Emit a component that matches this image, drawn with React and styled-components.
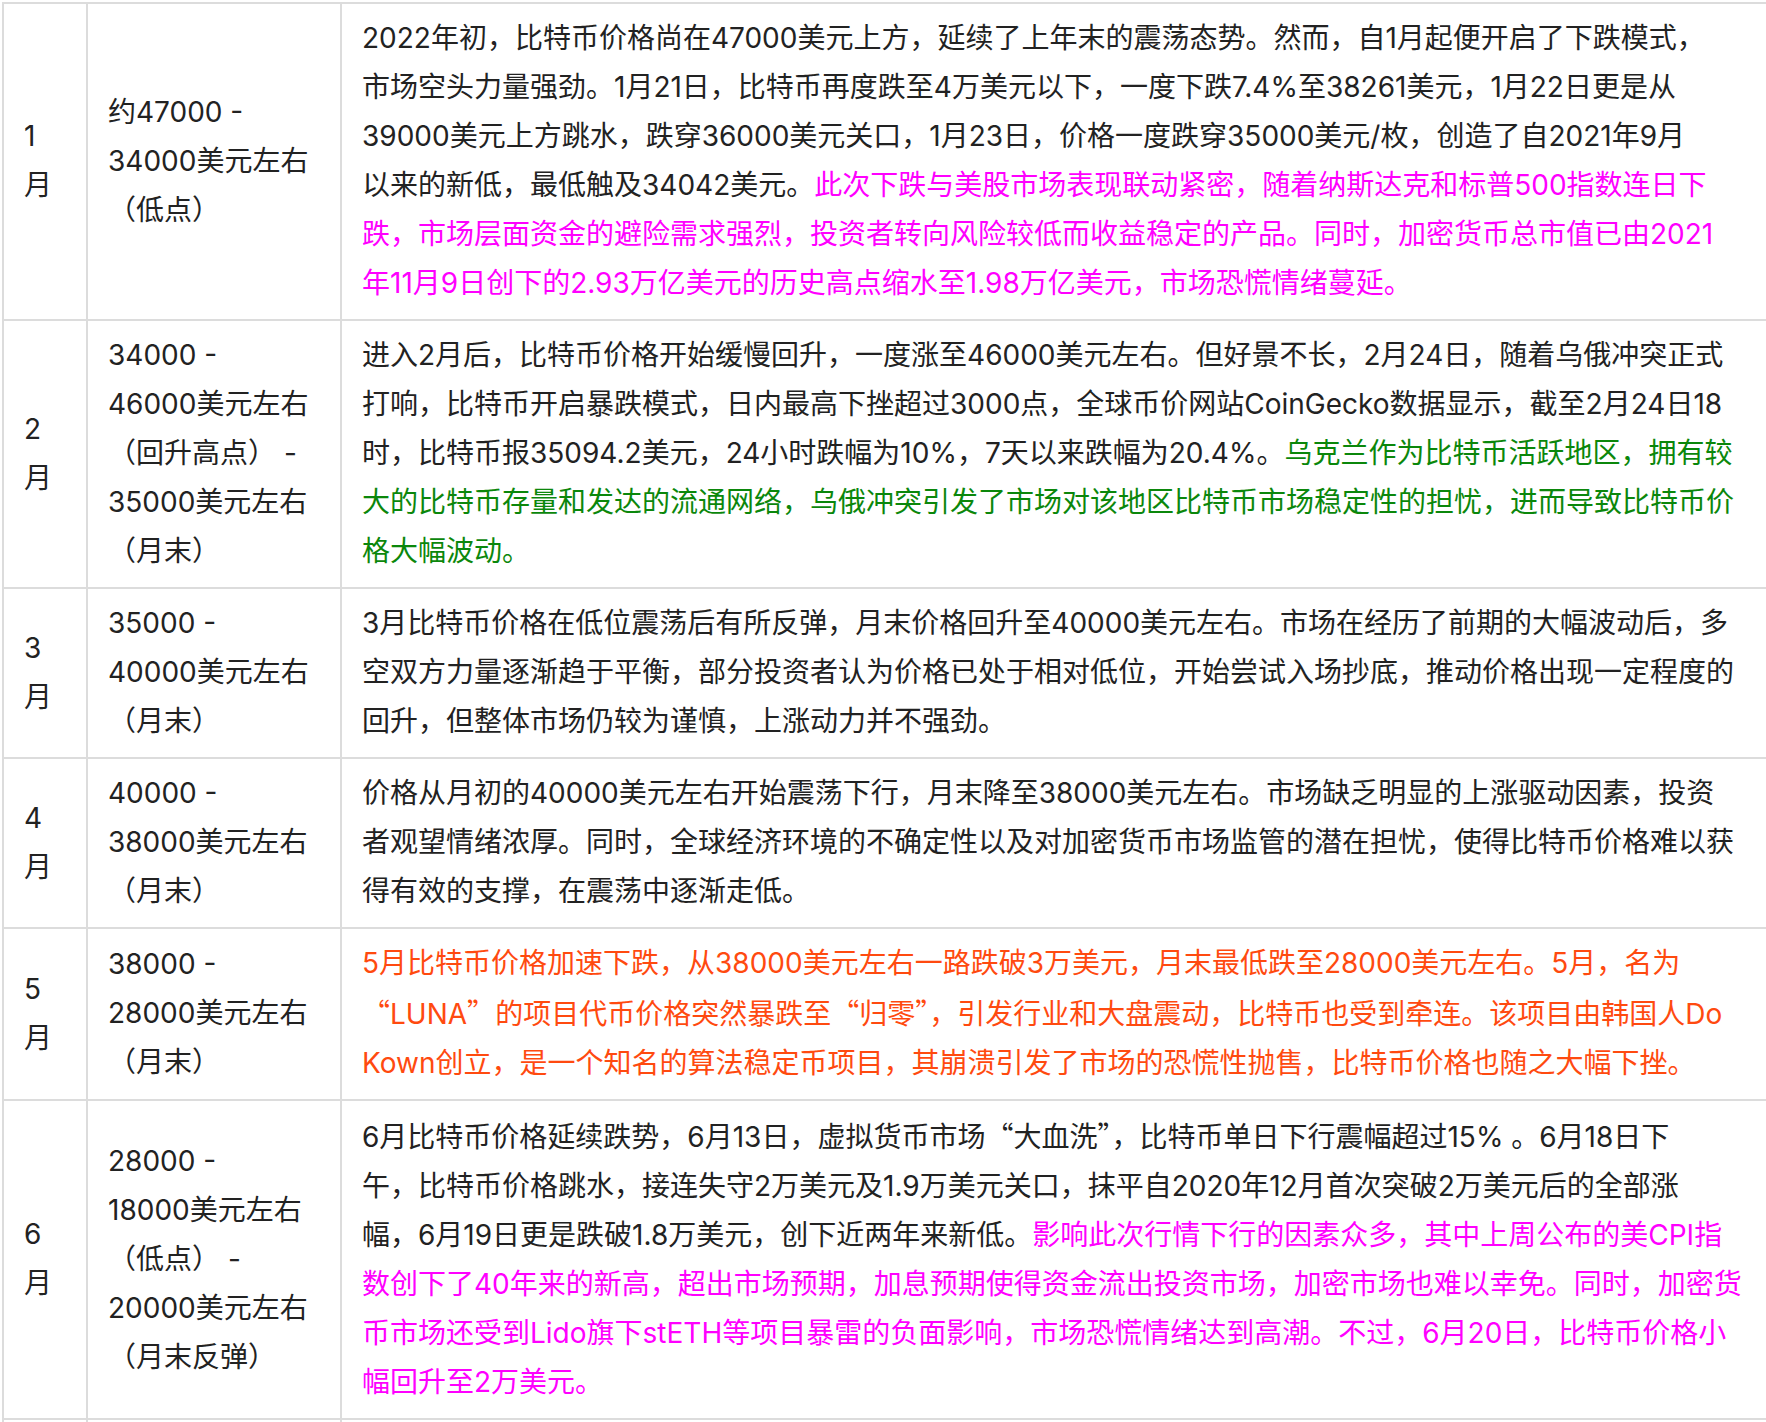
import React from 'react';
import styled, { createGlobalStyle } from 'styled-components';

const GlobalStyle = createGlobalStyle`
  html, body {
    margin: 0;
    padding: 0;
    background: #fff;
    overflow: hidden;
  }
  body {
    font-family: Inter, "Noto Sans CJK SC", sans-serif;
  }
`;

const tones = {
  plain: '#222222',
  pink: '#ff00ff',
  green: '#0b870b',
  red: '#ff4a0f',
};

const Page = styled.div`
  padding: 2px 0 0 2px;
  overflow: hidden;
`;

const Table = styled.table`
  width: 1820px;
  border-collapse: collapse;
  table-layout: fixed;
  font-family: Inter, "Noto Sans CJK SC", sans-serif;
  font-size: 28px;
  line-height: 49px;
  color: ${tones.plain};
`;

const Col = styled.col`
  width: ${(p) => (p.$w ? `${p.$w}px` : 'auto')};
`;

const Cell = styled.td`
  border: 2px solid #dcdcdc;
  padding: 10px 20px 11px;
  vertical-align: ${(p) => (p.$top ? 'top' : 'middle')};
  white-space: nowrap;
  overflow: hidden;
`;

const EmptyRow = styled.tr`
  height: 60px;
`;

const Line = styled.div`
  display: block;
`;

const Seg = styled.span`
  color: ${(p) => tones[p.$tone] || tones.plain};
`;

const Quote = styled.span`
  font-family: "Noto Sans CJK SC", sans-serif;
`;

// [tone, text] pairs per line; “ ” get the CJK face so they stay full width
const rows = [
  {
    month: '1',
    range: ['约47000 -', '34000美元左右', '（低点）'],
    desc: [
      [['plain', '2022年初，比特币价格尚在47000美元上方，延续了上年末的震荡态势。然而，自1月起便开启了下跌模式，']],
      [['plain', '市场空头力量强劲。1月21日，比特币再度跌至4万美元以下，一度下跌7.4%至38261美元，1月22日更是从']],
      [['plain', '39000美元上方跳水，跌穿36000美元关口，1月23日，价格一度跌穿35000美元/枚，创造了自2021年9月']],
      [['plain', '以来的新低，最低触及34042美元。'], ['pink', '此次下跌与美股市场表现联动紧密，随着纳斯达克和标普500指数连日下']],
      [['pink', '跌，市场层面资金的避险需求强烈，投资者转向风险较低而收益稳定的产品。同时，加密货币总市值已由2021']],
      [['pink', '年11月9日创下的2.93万亿美元的历史高点缩水至1.98万亿美元，市场恐慌情绪蔓延。']],
    ],
  },
  {
    month: '2',
    range: ['34000 -', '46000美元左右', '（回升高点） -', '35000美元左右', '（月末）'],
    desc: [
      [['plain', '进入2月后，比特币价格开始缓慢回升，一度涨至46000美元左右。但好景不长，2月24日，随着乌俄冲突正式']],
      [['plain', '打响，比特币开启暴跌模式，日内最高下挫超过3000点，全球币价网站CoinGecko数据显示，截至2月24日18']],
      [['plain', '时，比特币报35094.2美元，24小时跌幅为10%，7天以来跌幅为20.4%。'], ['green', '乌克兰作为比特币活跃地区，拥有较']],
      [['green', '大的比特币存量和发达的流通网络，乌俄冲突引发了市场对该地区比特币市场稳定性的担忧，进而导致比特币价']],
      [['green', '格大幅波动。']],
    ],
  },
  {
    month: '3',
    range: ['35000 -', '40000美元左右', '（月末）'],
    desc: [
      [['plain', '3月比特币价格在低位震荡后有所反弹，月末价格回升至40000美元左右。市场在经历了前期的大幅波动后，多']],
      [['plain', '空双方力量逐渐趋于平衡，部分投资者认为价格已处于相对低位，开始尝试入场抄底，推动价格出现一定程度的']],
      [['plain', '回升，但整体市场仍较为谨慎，上涨动力并不强劲。']],
    ],
  },
  {
    month: '4',
    range: ['40000 -', '38000美元左右', '（月末）'],
    desc: [
      [['plain', '价格从月初的40000美元左右开始震荡下行，月末降至38000美元左右。市场缺乏明显的上涨驱动因素，投资']],
      [['plain', '者观望情绪浓厚。同时，全球经济环境的不确定性以及对加密货币市场监管的潜在担忧，使得比特币价格难以获']],
      [['plain', '得有效的支撑，在震荡中逐渐走低。']],
    ],
  },
  {
    month: '5',
    range: ['38000 -', '28000美元左右', '（月末）'],
    desc: [
      [['red', '5月比特币价格加速下跌，从38000美元左右一路跌破3万美元，月末最低跌至28000美元左右。5月，名为']],
      [['red', '“LUNA”的项目代币价格突然暴跌至“归零”，引发行业和大盘震动，比特币也受到牵连。该项目由韩国人Do']],
      [['red', 'Kown创立，是一个知名的算法稳定币项目，其崩溃引发了市场的恐慌性抛售，比特币价格也随之大幅下挫。']],
    ],
  },
  {
    month: '6',
    range: ['28000 -', '18000美元左右', '（低点） -', '20000美元左右', '（月末反弹）'],
    desc: [
      [['plain', '6月比特币价格延续跌势，6月13日，虚拟货币市场“大血洗”，比特币单日下行震幅超过15% 。6月18日下']],
      [['plain', '午，比特币价格跳水，接连失守2万美元及1.9万美元关口，抹平自2020年12月首次突破2万美元后的全部涨']],
      [['plain', '幅，6月19日更是跌破1.8万美元，创下近两年来新低。'], ['pink', '影响此次行情下行的因素众多，其中上周公布的美CPI指']],
      [['pink', '数创下了40年来的新高，超出市场预期，加息预期使得资金流出投资市场，加密市场也难以幸免。同时，加密货']],
      [['pink', '币市场还受到Lido旗下stETH等项目暴雷的负面影响，市场恐慌情绪达到高潮。不过，6月20日，比特币价格小']],
      [['pink', '幅回升至2万美元。']],
    ],
  },
];

const renderText = (text) =>
  text.split(/([“”])/).map((part, i) =>
    part === '“' || part === '”' ? <Quote key={i}>{part}</Quote> : part
  );

const App = () => (
  <>
    <GlobalStyle />
    <Page>
      <Table>
        <colgroup>
          <Col $w={84} />
          <Col $w={254} />
          <Col />
        </colgroup>
        <tbody>
          {rows.map((row) => (
            <tr key={row.month}>
              <Cell>
                <Line>{row.month}</Line>
                <Line>月</Line>
              </Cell>
              <Cell>
                {row.range.map((r, i) => (
                  <Line key={i}>{r}</Line>
                ))}
              </Cell>
              <Cell $top>
                {row.desc.map((line, i) => (
                  <Line key={i}>
                    {line.map(([tone, text], j) => (
                      <Seg key={j} $tone={tone}>
                        {renderText(text)}
                      </Seg>
                    ))}
                  </Line>
                ))}
              </Cell>
            </tr>
          ))}
          <EmptyRow>
            <Cell />
            <Cell />
            <Cell />
          </EmptyRow>
        </tbody>
      </Table>
    </Page>
  </>
);

export default App;
